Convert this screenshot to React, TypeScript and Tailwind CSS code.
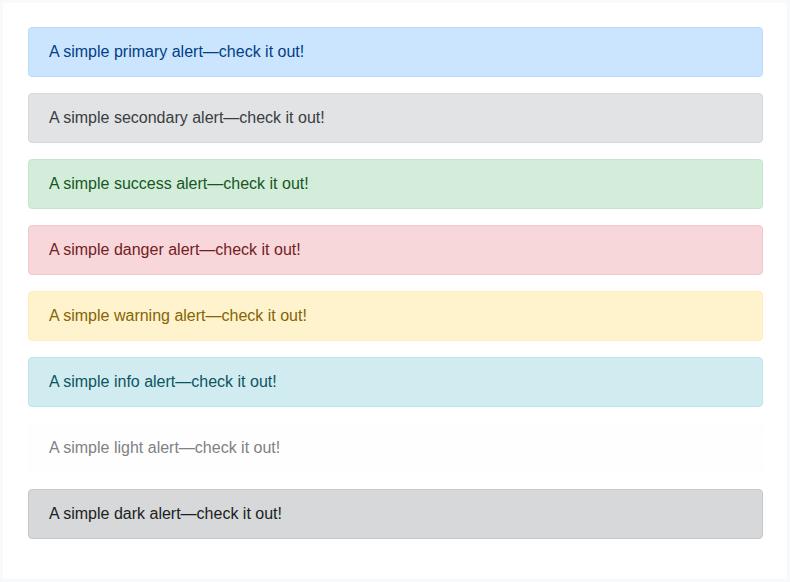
import React from 'react';

const alerts = [
  { name: 'primary', cls: 'bg-[#cce5ff] border-[#b8daff] text-[#004085]' },
  { name: 'secondary', cls: 'bg-[#e2e3e5] border-[#d6d8db] text-[#383d41]' },
  { name: 'success', cls: 'bg-[#d4edda] border-[#c3e6cb] text-[#155724]' },
  { name: 'danger', cls: 'bg-[#f8d7da] border-[#f5c6cb] text-[#721c24]' },
  { name: 'warning', cls: 'bg-[#fff3cd] border-[#ffeeba] text-[#856404]' },
  { name: 'info', cls: 'bg-[#d1ecf1] border-[#bee5eb] text-[#0c5460]' },
  { name: 'light', cls: 'bg-[#fefefe] border-[#fdfdfe] text-[#818182]' },
  { name: 'dark', cls: 'bg-[#d6d8d9] border-[#c6c8ca] text-[#1b1e21]' },
];

export default function App() {
  return (
    <div className="w-[790px] h-[582px] bg-[#f8f9fa] p-[3px] font-['Liberation_Sans',Arial,sans-serif]">
      <div className="h-full bg-white pt-[24px] pl-[25px] pr-[24px] flex flex-col gap-4">
        {alerts.map((a) => (
          <div
            key={a.name}
            className={`border rounded px-5 py-3 text-base leading-6 ${a.cls}`}
          >
            A simple {a.name} alert—check it out!
          </div>
        ))}
      </div>
    </div>
  );
}
